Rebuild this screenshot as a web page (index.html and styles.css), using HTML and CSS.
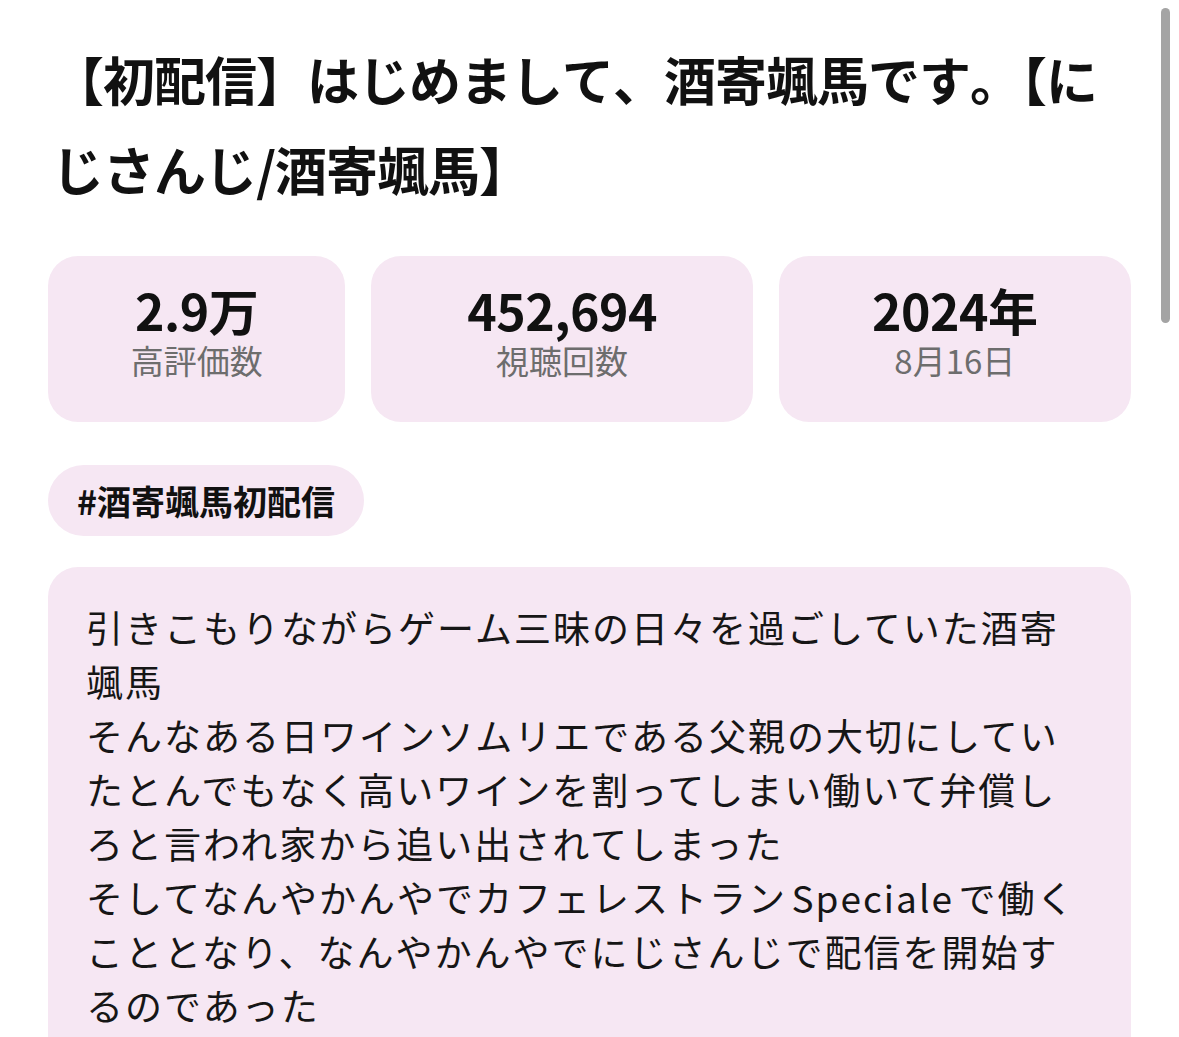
FILE: index.html
```html
<!DOCTYPE html>
<html lang="ja">
<head>
<meta charset="utf-8">
<title>酒寄颯馬</title>
<link rel="stylesheet" href="styles.css">
</head>
<body>
<div class="page">
  <h1 class="title">【初配信】はじめまして、酒寄颯馬です。【にじさんじ/酒寄颯馬】</h1>
  <div class="stats">
    <div class="stat">
      <div class="stat-value">2.9万</div>
      <div class="stat-label">高評価数</div>
    </div>
    <div class="stat">
      <div class="stat-value">452,694</div>
      <div class="stat-label">視聴回数</div>
    </div>
    <div class="stat">
      <div class="stat-value">2024年</div>
      <div class="stat-label">8月16日</div>
    </div>
  </div>
  <div class="tags">
    <span class="tag">#酒寄颯馬初配信</span>
  </div>
  <div class="desc">
    <p class="desc-text">引きこもりながらゲーム三昧の日々を過ごしていた酒寄颯馬<br>そんなある日ワインソムリエである父親の大切にしていたとんでもなく高いワインを割ってしまい働いて弁償しろと言われ家から追い出されてしまった<br>そしてなんやかんやでカフェレストランSpecialeで働くこととなり、なんやかんやでにじさんじで配信を開始するのであった</p>
  </div>
</div>
<div class="scrollbar"></div>
</body>
</html>
```

FILE: styles.css
```css
html, body {
  margin: 0;
  padding: 0;
  background: #ffffff;
}
body {
  font-family: "Noto Sans CJK JP", "Noto Sans", sans-serif;
  color: #111111;
  overflow: hidden;
  height: 1037px;
}
.page {
  padding: 0 48px;
}
.title {
  margin: 34px 0 0 0;
  padding: 0 9px 0 4px;
  font-size: 52px;
  letter-spacing: -1px;
  line-height: 90px;
  font-weight: 700;
  font-kerning: none;
  color: #111111;
}
.stats {
  margin-top: 42px;
  display: grid;
  grid-template-columns: 298fr 382fr 353fr;
  gap: 26px;
}
.stat {
  background: #f6e7f3;
  border-radius: 30px;
  height: 166px;
  box-sizing: border-box;
  padding: 26px 0 40px;
  display: flex;
  flex-direction: column;
  align-items: center;
  justify-content: center;
  gap: 2px;
}
.stat-value {
  font-size: 50px;
  font-weight: 700;
  line-height: 54px;
  color: #111111;
  letter-spacing: -0.5px;
}
.stat-label {
  font-size: 33px;
  line-height: 44px;
  color: #6d6d6d;
}
.tags {
  margin-top: 43px;
  display: flex;
}
.tag {
  background: #f6e7f3;
  border-radius: 36px;
  height: 71px;
  line-height: 71px;
  padding: 0 29px;
  font-size: 34px;
  font-weight: 700;
  color: #111111;
}
.desc {
  margin-top: 31px;
  background: #f6e7f3;
  border-radius: 30px;
  padding: 33px 45px 40px 38px;
}
.desc-text {
  margin: 0;
  font-size: 37px;
  letter-spacing: 2px;
  line-height: 54px;
  color: #161616;
  text-autospace: normal;
}
.scrollbar {
  position: fixed;
  top: 8px;
  left: 1161px;
  width: 9px;
  height: 315px;
  border-radius: 5px;
  background: #a4a4a4;
}
```
